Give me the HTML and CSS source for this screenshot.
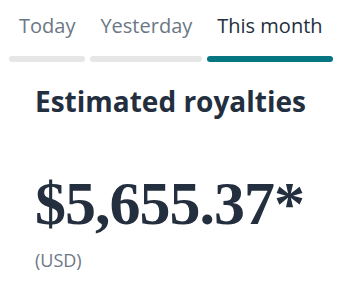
FILE: index.html
```html
<!DOCTYPE html>
<html lang="en">
<head>
    <meta charset="UTF-8">
    <title>Royalties</title>
    <link rel="stylesheet" href="styles.css">
</head>
<body>
    <div class="tabs">
        <div class="tab">
            <span class="tab-label">Today</span>
            <div class="tab-bar"></div>
        </div>
        <div class="tab">
            <span class="tab-label">Yesterday</span>
            <div class="tab-bar"></div>
        </div>
        <div class="tab active">
            <span class="tab-label">This month</span>
            <div class="tab-bar"></div>
        </div>
    </div>

    <div class="summary">
        <h2 class="summary-title">Estimated royalties</h2>
        <p class="amount">$5,655.37*</p>
        <p class="currency">(USD)</p>
    </div>
</body>
</html>
```

FILE: styles.css
```css
* {
    margin: 0;
    padding: 0;
    box-sizing: border-box;
}

body {
    background: #ffffff;
    font-family: "Open Sans", Arial, sans-serif;
    color: #232f3e;
}

.tabs {
    display: flex;
    gap: 5px;
    padding: 12px 0 0 9px;
}

.tab {
    display: flex;
    flex-direction: column;
    align-items: stretch;
}

.tab-label {
    padding: 0 10px;
    font-size: 20px;
    line-height: 28px;
    color: #6b7785;
    white-space: nowrap;
}

.tab-bar {
    height: 6px;
    margin-top: 16px;
    border-radius: 3px;
    background: #e6e6e6;
}

.tab.active .tab-label {
    color: #232f3e;
}

.tab.active .tab-bar {
    background: #067683;
}

.summary {
    padding: 0 0 0 35px;
}

.summary-title {
    margin-top: 21px;
    font-size: 28px;
    line-height: 36px;
    font-weight: 700;
}

.amount {
    margin-top: 49px;
    font-family: "Liberation Serif", "Times New Roman", serif;
    font-size: 62px;
    line-height: 70px;
    font-weight: 700;
    letter-spacing: -1px;
}

.currency {
    margin-top: 10px;
    font-size: 18px;
    line-height: 24px;
    color: #6b7785;
}
```
